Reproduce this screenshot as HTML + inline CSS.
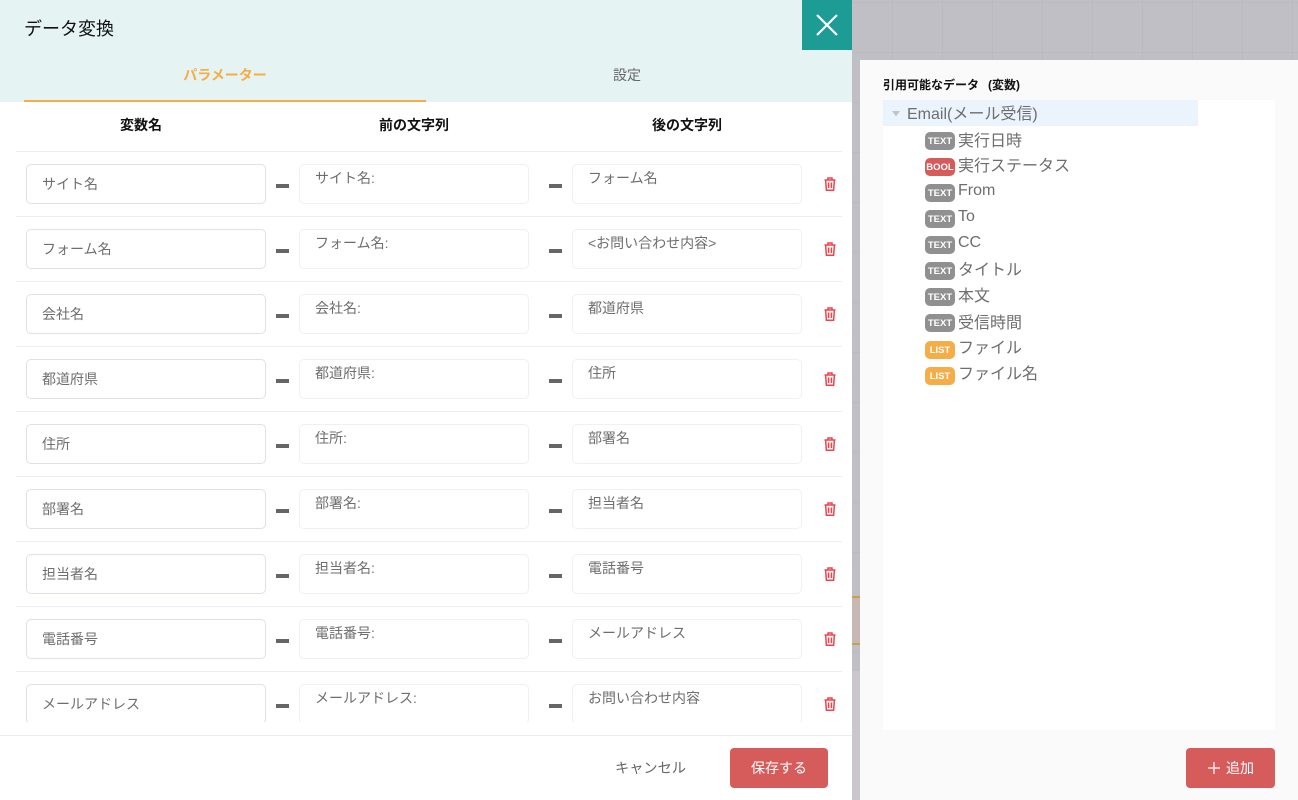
<!DOCTYPE html>
<html lang="ja"><head><meta charset="utf-8">
<style>
*{box-sizing:border-box;margin:0;padding:0}
html,body{width:1298px;height:800px;overflow:hidden;background:#c0bfc6;font-family:"Liberation Sans","Noto Sans CJK JP",sans-serif}
.a{position:absolute;white-space:nowrap}
#bg{left:852px;top:0;width:446px;height:800px;background-color:#c0bfc6;background-image:linear-gradient(#bbbac2 1px,transparent 1px),linear-gradient(90deg,#bbbac2 1px,transparent 1px);background-size:50px 50px;background-position:40px 2px}
#left{left:0;top:0;width:852px;height:800px;background:#fff;overflow:hidden}
#head{left:0;top:0;width:852px;height:102px;background:#e5f4f3}
.in{position:absolute;height:40px;background:#fff;border-radius:5px;font-size:14px;color:#6e6e6e;white-space:nowrap}
.i1{left:26px;width:240px;border:1px solid #dfe0e8;padding:10px 15px;line-height:18px}
.i2{left:299px;width:230px;border:1px solid #f0f0f4;padding:3px 15px;line-height:20px}
.i3{left:572px;width:230px;border:1px solid #f0f0f4;padding:3px 15px;line-height:20px}
.d{position:absolute;width:13px;height:4px;background:#666}
.l{position:absolute;left:16px;width:826px;height:1px;background:#ececf2}
.t{position:absolute;left:824px;width:12px;height:14px}
.th{font-size:14px;font-weight:bold;color:#111;text-align:center}
.badge{position:absolute;left:925px;width:30px;height:18px;border-radius:5px;color:#fff;font-size:9.5px;font-weight:bold;text-align:center;line-height:19px;font-family:"Liberation Sans",sans-serif}
.tx{position:absolute;left:958px;font-size:16px;line-height:20px;color:#6e6e6e;white-space:nowrap}
</style></head><body>
<div id="bg" class="a"></div>
<div class="a" style="left:852px;top:596px;width:8px;height:49px;background:#c8b8b4;border-top:2px solid #c9a04e;border-bottom:2px solid #c9a04e"></div>
<div class="a" style="left:852px;top:671px;width:8px;height:129px;background:#cbc6ce"></div>
<div id="left" class="a">
<div id="head" class="a"></div>
<div class="a" style="left:24px;top:17px;font-size:18px;line-height:24px;color:#111">データ変換</div>
<div class="a" style="left:802px;top:0;width:50px;height:50px;background:#1c9c94"><svg width="50" height="50" viewBox="0 0 50 50"><path d="M15 15L35 35M35 15L15 35" stroke="#fff" stroke-width="2.2" fill="none"/></svg></div>
<div class="a" style="left:24px;top:66px;width:402px;text-align:center;font-size:14px;line-height:18px;font-weight:bold;color:#f5ad48">パラメーター</div>
<div class="a" style="left:24px;top:100px;width:402px;height:2px;background:#f5ad48"></div>
<div class="a" style="left:426px;top:66px;width:402px;text-align:center;font-size:14px;line-height:18px;color:#666">設定</div>
<div class="a th" style="left:26px;top:116px;width:230px;line-height:18px">変数名</div>
<div class="a th" style="left:299px;top:116px;width:230px;line-height:18px">前の文字列</div>
<div class="a th" style="left:572px;top:116px;width:230px;line-height:18px">後の文字列</div>
<div class="a" style="left:0;top:0;width:852px;height:722px;overflow:hidden">
<div class="l" style="top:151px"></div>
<div class="in i1" style="top:164px">サイト名</div><div class="d" style="left:276px;top:184px"></div><div class="in i2" style="top:164px">サイト名:</div><div class="d" style="left:549px;top:184px"></div><div class="in i3" style="top:164px">フォーム名</div>
<svg class="t" style="top:177px" viewBox="0 0 12 14"><path d="M0.5 3H11.5M4 3V1H8V3M1.6 3L2.4 13.3H9.6L10.4 3M4.6 5.5V11M7.4 5.5V11" stroke="#f4404a" stroke-width="1.5" fill="none"/></svg>
<div class="l" style="top:216px"></div>
<div class="in i1" style="top:229px">フォーム名</div><div class="d" style="left:276px;top:249px"></div><div class="in i2" style="top:229px">フォーム名:</div><div class="d" style="left:549px;top:249px"></div><div class="in i3" style="top:229px">&lt;お問い合わせ内容&gt;</div>
<svg class="t" style="top:242px" viewBox="0 0 12 14"><path d="M0.5 3H11.5M4 3V1H8V3M1.6 3L2.4 13.3H9.6L10.4 3M4.6 5.5V11M7.4 5.5V11" stroke="#f4404a" stroke-width="1.5" fill="none"/></svg>
<div class="l" style="top:281px"></div>
<div class="in i1" style="top:294px">会社名</div><div class="d" style="left:276px;top:314px"></div><div class="in i2" style="top:294px">会社名:</div><div class="d" style="left:549px;top:314px"></div><div class="in i3" style="top:294px">都道府県</div>
<svg class="t" style="top:307px" viewBox="0 0 12 14"><path d="M0.5 3H11.5M4 3V1H8V3M1.6 3L2.4 13.3H9.6L10.4 3M4.6 5.5V11M7.4 5.5V11" stroke="#f4404a" stroke-width="1.5" fill="none"/></svg>
<div class="l" style="top:346px"></div>
<div class="in i1" style="top:359px">都道府県</div><div class="d" style="left:276px;top:379px"></div><div class="in i2" style="top:359px">都道府県:</div><div class="d" style="left:549px;top:379px"></div><div class="in i3" style="top:359px">住所</div>
<svg class="t" style="top:372px" viewBox="0 0 12 14"><path d="M0.5 3H11.5M4 3V1H8V3M1.6 3L2.4 13.3H9.6L10.4 3M4.6 5.5V11M7.4 5.5V11" stroke="#f4404a" stroke-width="1.5" fill="none"/></svg>
<div class="l" style="top:411px"></div>
<div class="in i1" style="top:424px">住所</div><div class="d" style="left:276px;top:444px"></div><div class="in i2" style="top:424px">住所:</div><div class="d" style="left:549px;top:444px"></div><div class="in i3" style="top:424px">部署名</div>
<svg class="t" style="top:437px" viewBox="0 0 12 14"><path d="M0.5 3H11.5M4 3V1H8V3M1.6 3L2.4 13.3H9.6L10.4 3M4.6 5.5V11M7.4 5.5V11" stroke="#f4404a" stroke-width="1.5" fill="none"/></svg>
<div class="l" style="top:476px"></div>
<div class="in i1" style="top:489px">部署名</div><div class="d" style="left:276px;top:509px"></div><div class="in i2" style="top:489px">部署名:</div><div class="d" style="left:549px;top:509px"></div><div class="in i3" style="top:489px">担当者名</div>
<svg class="t" style="top:502px" viewBox="0 0 12 14"><path d="M0.5 3H11.5M4 3V1H8V3M1.6 3L2.4 13.3H9.6L10.4 3M4.6 5.5V11M7.4 5.5V11" stroke="#f4404a" stroke-width="1.5" fill="none"/></svg>
<div class="l" style="top:541px"></div>
<div class="in i1" style="top:554px">担当者名</div><div class="d" style="left:276px;top:574px"></div><div class="in i2" style="top:554px">担当者名:</div><div class="d" style="left:549px;top:574px"></div><div class="in i3" style="top:554px">電話番号</div>
<svg class="t" style="top:567px" viewBox="0 0 12 14"><path d="M0.5 3H11.5M4 3V1H8V3M1.6 3L2.4 13.3H9.6L10.4 3M4.6 5.5V11M7.4 5.5V11" stroke="#f4404a" stroke-width="1.5" fill="none"/></svg>
<div class="l" style="top:606px"></div>
<div class="in i1" style="top:619px">電話番号</div><div class="d" style="left:276px;top:639px"></div><div class="in i2" style="top:619px">電話番号:</div><div class="d" style="left:549px;top:639px"></div><div class="in i3" style="top:619px">メールアドレス</div>
<svg class="t" style="top:632px" viewBox="0 0 12 14"><path d="M0.5 3H11.5M4 3V1H8V3M1.6 3L2.4 13.3H9.6L10.4 3M4.6 5.5V11M7.4 5.5V11" stroke="#f4404a" stroke-width="1.5" fill="none"/></svg>
<div class="l" style="top:671px"></div>
<div class="in i1" style="top:684px">メールアドレス</div><div class="d" style="left:276px;top:704px"></div><div class="in i2" style="top:684px">メールアドレス:</div><div class="d" style="left:549px;top:704px"></div><div class="in i3" style="top:684px">お問い合わせ内容</div>
<svg class="t" style="top:697px" viewBox="0 0 12 14"><path d="M0.5 3H11.5M4 3V1H8V3M1.6 3L2.4 13.3H9.6L10.4 3M4.6 5.5V11M7.4 5.5V11" stroke="#f4404a" stroke-width="1.5" fill="none"/></svg>
</div>
<div class="a" style="left:0;top:735px;width:852px;height:1px;background:#ececf0"></div>
<div class="a" style="left:615px;top:759px;font-size:14.2px;line-height:20px;color:#666">キャンセル</div>
<div class="a" style="left:730px;top:748px;width:98px;height:40px;background:#d65c5c;border-radius:4px;color:#fff;font-size:14px;line-height:40px;text-align:center">保存する</div>
</div>
<div class="a" style="left:860px;top:60px;width:438px;height:740px;background:#fafafa"></div>
<div class="a" style="left:883px;top:76px;font-size:12px;line-height:18px;font-weight:bold;color:#111">引用可能なデータ<span style="margin-left:9px">(変数)</span></div>
<div class="a" style="left:883px;top:100px;width:392px;height:630px;background:#fff"></div>
<div class="a" style="left:883px;top:100px;width:315px;height:26px;background:#ebf3fd"></div>
<svg class="a" style="left:891px;top:110px" width="10" height="8" viewBox="0 0 10 8"><path d="M1 1H9L5 6.5Z" fill="#c0c4cc"/></svg>
<div class="a" style="left:907px;top:105px;font-size:16px;line-height:20px;color:#6e6e6e">Email(メール受信)</div>
<div class="badge" style="top:132px;background:#909090">TEXT</div><div class="tx" style="top:132px">実行日時</div>
<div class="badge" style="top:158px;background:#d65c5c">BOOL</div><div class="tx" style="top:157px">実行ステータス</div>
<div class="badge" style="top:184px;background:#909090">TEXT</div><div class="tx" style="top:181px">From</div>
<div class="badge" style="top:210px;background:#909090">TEXT</div><div class="tx" style="top:207px">To</div>
<div class="badge" style="top:236px;background:#909090">TEXT</div><div class="tx" style="top:233px">CC</div>
<div class="badge" style="top:262px;background:#909090">TEXT</div><div class="tx" style="top:261px">タイトル</div>
<div class="badge" style="top:288px;background:#909090">TEXT</div><div class="tx" style="top:287px">本文</div>
<div class="badge" style="top:314px;background:#909090">TEXT</div><div class="tx" style="top:314px">受信時間</div>
<div class="badge" style="top:341px;background:#f5ad48">LIST</div><div class="tx" style="top:339px">ファイル</div>
<div class="badge" style="top:367px;background:#f5ad48">LIST</div><div class="tx" style="top:365px">ファイル名</div>
<div class="a" style="left:1186px;top:748px;width:89px;height:40px;background:#d65c5c;border-radius:4px"></div>
<svg class="a" style="left:1207px;top:761px" width="14" height="14" viewBox="0 0 14 14"><path d="M7 1V13M1 7H13" stroke="#fff" stroke-width="1.2" fill="none"/></svg>
<div class="a" style="left:1226px;top:758px;font-size:14px;line-height:20px;color:#fff">追加</div>
</body></html>
